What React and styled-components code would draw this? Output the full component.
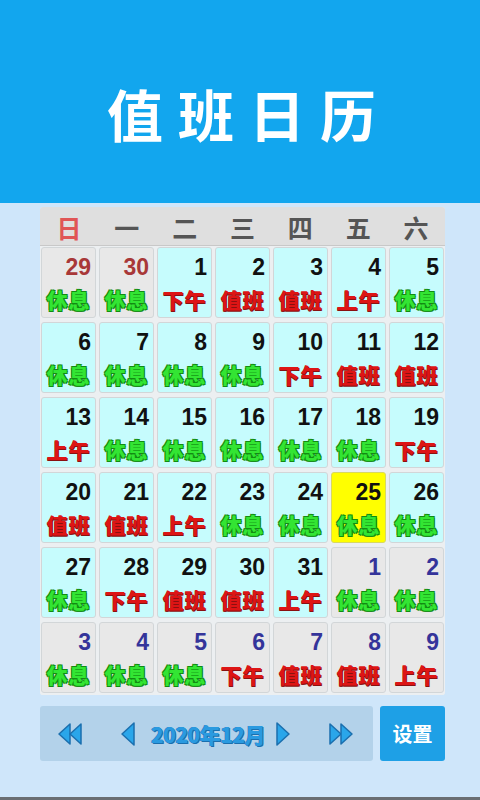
import React from "react";
import styled, { createGlobalStyle } from "styled-components";

const Global = createGlobalStyle`
  html, body { margin: 0; padding: 0; }
  body { background: #cfe6fa; font-family: "Liberation Sans", "Noto Sans CJK SC", sans-serif; }
`;

const Page = styled.div`
  width: 480px;
  height: 800px;
  display: flex;
  flex-direction: column;
  background: #cfe6fa;
  overflow: hidden;
`;

const Header = styled.header`
  height: 203px;
  flex: none;
  background: #12a6ee;
  display: flex;
  align-items: center;
  justify-content: center;
`;

const Title = styled.h1`
  margin: 0 0 -22px 0;
  padding-left: 18px;
  font-family: "Noto Sans CJK SC", sans-serif;
  font-weight: 700;
  font-size: 56px;
  letter-spacing: 15px;
  color: #fff;
  line-height: 1;
`;

const Main = styled.main`
  flex: 1;
  padding: 4px 35px 0 40px;
  display: flex;
  flex-direction: column;
`;

const Calendar = styled.div`
  width: 405px;
  background: #e9eef2;
  border-radius: 3px;
  overflow: hidden;
`;

const WeekRow = styled.div`
  height: 38px;
  display: grid;
  grid-template-columns: repeat(7, 1fr);
  background: #dfdfdf;
  border-bottom: 1px solid #c8c8c8;
`;

const WeekDay = styled.div`
  display: flex;
  align-items: center;
  justify-content: center;
  font-family: "Noto Sans CJK SC", sans-serif;
  font-weight: 700;
  font-size: 25px;
  color: ${(p) => (p.$sun ? "#e05555" : "#555")};
  padding-top: 2px;
`;

const Grid = styled.div`
  display: grid;
  grid-template-columns: repeat(7, 55px);
  grid-auto-rows: 71px;
  column-gap: 3px;
  row-gap: 4px;
  padding: 1px 1px 2px 1px;
  background: #eceff1;
`;

const Cell = styled.div`
  background: ${(p) => (p.$today ? "#ffff00" : p.$other ? "#e8e8e8" : "#c6fcfd")};
  border: 1px solid ${(p) => (p.$today ? "#d8d860" : "#d2d6d8")};
  border-radius: 3px;
  display: flex;
  flex-direction: column;
  align-items: stretch;
`;

const Num = styled.div`
  text-align: right;
  padding: 7px 4px 0 0;
  height: 24px;
  font-family: "Liberation Sans", sans-serif;
  font-weight: 700;
  font-size: 23px;
  line-height: 24px;
  color: ${(p) => p.$color};
`;

const Label = styled.div`
  margin-top: 8px;
  text-align: center;
  font-family: "Noto Sans CJK SC", sans-serif;
  font-weight: 900;
  font-size: 21px;
  line-height: 24px;
  letter-spacing: 1px;
  color: ${(p) => (p.$rest ? "#33e533" : "#dd1515")};
  text-shadow: ${(p) =>
    p.$rest
      ? "1px 1px 0 #138a13, -1px -1px 0 #138a13, 1px -1px 0 #138a13, -1px 1px 0 #138a13"
      : "1px 1px 0 #8a1010, 0 1px 0 #8a1010"};
`;

const Bottom = styled.div`
  margin-top: 11px;
  display: flex;
  gap: 7px;
  height: 55px;
  width: 405px;
`;

const Nav = styled.div`
  flex: 1;
  background: #b3d2ea;
  border-radius: 3px;
  display: flex;
  align-items: center;
  padding-left: 17px;
`;

const IconBtn = styled.div`
  display: flex;
  align-items: center;
  justify-content: center;
  margin-right: ${(p) => p.$after || 0}px;
`;

const MonthText = styled.div`
  margin-right: 10px;
  font-family: "Noto Sans CJK SC", sans-serif;
  font-weight: 900;
  font-size: 21px;
  color: #2a9ae0;
  letter-spacing: -0.6px;
  text-shadow: 1px 1px 0 #1a6fae, -0.5px -0.5px 0 #1a6fae;
`;

const Settings = styled.div`
  width: 65px;
  background: #1ea0e6;
  border-radius: 3px;
  display: flex;
  align-items: center;
  justify-content: center;
  color: #fff;
  font-family: "Noto Sans CJK SC", sans-serif;
  font-weight: 700;
  font-size: 20px;
`;

const StatusLine = styled.div`
  height: 3px;
  flex: none;
  background: #6a6e72;
`;

const fill = "#2aa6ea";
const stroke = "#1b6fae";

const DoubleLeft = () => (
  <svg width="26" height="26" viewBox="0 0 26 26">
    <path d="M13 3 L2 13 L13 23 Z" fill={fill} stroke={stroke} strokeWidth="1.5" strokeLinejoin="round" />
    <path d="M24 3 L13 13 L24 23 Z" fill={fill} stroke={stroke} strokeWidth="1.5" strokeLinejoin="round" />
  </svg>
);
const DoubleRight = () => (
  <svg width="26" height="26" viewBox="0 0 26 26">
    <path d="M2 3 L13 13 L2 23 Z" fill={fill} stroke={stroke} strokeWidth="1.5" strokeLinejoin="round" />
    <path d="M13 3 L24 13 L13 23 Z" fill={fill} stroke={stroke} strokeWidth="1.5" strokeLinejoin="round" />
  </svg>
);
const Left = () => (
  <svg width="16" height="26" viewBox="0 0 16 26">
    <path d="M14 2 L2 13 L14 24 Z" fill={fill} stroke={stroke} strokeWidth="1.5" strokeLinejoin="round" />
  </svg>
);
const Right = () => (
  <svg width="16" height="26" viewBox="0 0 16 26">
    <path d="M2 2 L14 13 L2 24 Z" fill={fill} stroke={stroke} strokeWidth="1.5" strokeLinejoin="round" />
  </svg>
);

const weekdays = ["日", "一", "二", "三", "四", "五", "六"];

const R = "休息", P = "下午", D = "值班", A = "上午";
const days = [
  [29, R, "prev"], [30, R, "prev"], [1, P], [2, D], [3, D], [4, A], [5, R],
  [6, R], [7, R], [8, R], [9, R], [10, P], [11, D], [12, D],
  [13, A], [14, R], [15, R], [16, R], [17, R], [18, R], [19, P],
  [20, D], [21, D], [22, A], [23, R], [24, R], [25, R, "today"], [26, R],
  [27, R], [28, P], [29, D], [30, D], [31, A], [1, R, "next"], [2, R, "next"],
  [3, R, "next"], [4, R, "next"], [5, R, "next"], [6, P, "next"], [7, D, "next"], [8, D, "next"], [9, A, "next"],
];

const numColor = (k) => (k === "prev" ? "#a83838" : k === "next" ? "#34349a" : "#111");

export default function App() {
  return (
    <Page>
      <Global />
      <Header>
        <Title>值班日历</Title>
      </Header>
      <Main>
        <Calendar>
          <WeekRow>
            {weekdays.map((w, i) => (
              <WeekDay key={w} $sun={i === 0}>{w}</WeekDay>
            ))}
          </WeekRow>
          <Grid>
            {days.map(([n, label, kind], i) => (
              <Cell key={i} $other={kind === "prev" || kind === "next"} $today={kind === "today"}>
                <Num $color={numColor(kind)}>{n}</Num>
                <Label $rest={label === R}>{label}</Label>
              </Cell>
            ))}
          </Grid>
        </Calendar>
        <Bottom>
          <Nav>
            <IconBtn $after={37}><DoubleLeft /></IconBtn>
            <IconBtn $after={15}><Left /></IconBtn>
            <MonthText>2020年12月</MonthText>
            <IconBtn $after={37}><Right /></IconBtn>
            <IconBtn><DoubleRight /></IconBtn>
          </Nav>
          <Settings>设置</Settings>
        </Bottom>
      </Main>
      <StatusLine />
    </Page>
  );
}
